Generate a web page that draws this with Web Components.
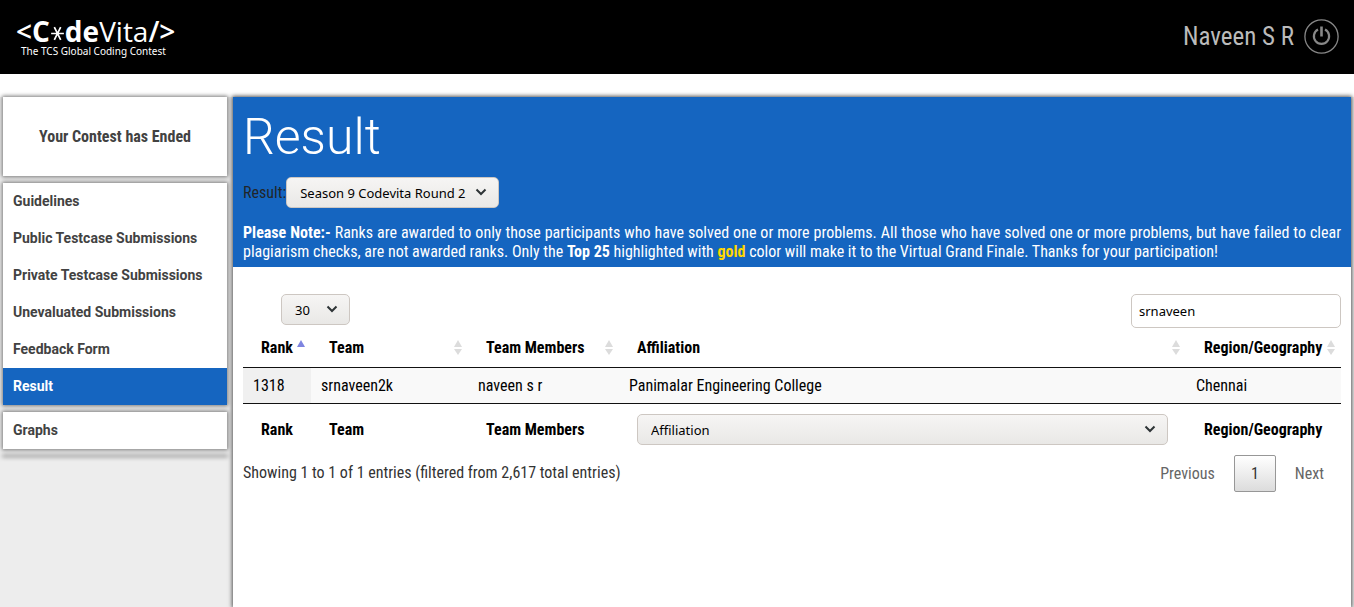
<!DOCTYPE html>
<html lang="en">
<head>
<meta charset="utf-8">
<title>CodeVita - Result</title>
<style>
  html { height: 100%; }
  body {
    margin: 0; min-height: 100%; background: #ededed; color: #212529;
    --condensed: "Roboto Condensed", Roboto, sans-serif;
    font: 16px/19px var(--condensed);
    display: flex; flex-direction: column;
  }
</style>
</head>
<body>
<contest-header user="Naveen S R"></contest-header>
<contest-layout>
  <side-nav slot="side">
    <side-card status>Your Contest has Ended</side-card>
    <side-card>
      <nav-item>Guidelines</nav-item>
      <nav-item>Public Testcase Submissions</nav-item>
      <nav-item>Private Testcase Submissions</nav-item>
      <nav-item>Unevaluated Submissions</nav-item>
      <nav-item>Feedback Form</nav-item>
      <nav-item active>Result</nav-item>
    </side-card>
    <side-card><nav-item>Graphs</nav-item></side-card>
    <side-card></side-card>
  </side-nav>
  <result-banner></result-banner>
  <result-table></result-table>
</contest-layout>

<script>
const define = (name, html, setup) => {
  const template = document.createElement('template');
  template.innerHTML = html;
  customElements.define(name, class extends HTMLElement {
    constructor() {
      super();
      this.attachShadow({ mode: 'open' }).append(template.content.cloneNode(true));
    }
    connectedCallback() { if (setup) setup(this, this.shadowRoot); }
  });
};

define('contest-logo', `
<style>
  :host { display: block; color: #fff; }
  a { display: block; color: inherit; text-decoration: none; }
  .name { display: flex; align-items: center; font: 600 28px/28px "Open Sans", sans-serif; }
  .name b { font-weight: 700; }
  .name .light { font-weight: 400; }
  svg { width: 15px; height: 17px; margin-top: 5px; }
  .tag { font: 10px/12px "Noto Sans", sans-serif; padding-left: 5px; }
</style>
<a href="#">
  <div class="name"><span>&lt;</span><b>C</b><svg viewBox="0 0 14 16" aria-hidden="true"><path d="M4 2l6 12M10 2L4 14M1 8h12" stroke="#fff" stroke-width="1.6"/></svg><b>de</b><span class="light">Vita</span><span>/&gt;</span></div>
  <div class="tag">The TCS Global Coding Contest</div>
</a>`);

define('contest-header', `
<style>
  :host { display: block; background: #000; }
  header { box-sizing: border-box; display: flex; justify-content: space-between; align-items: center; height: 74px; padding: 0 15px 1px 16px; }
  .user { display: flex; align-items: center; gap: 10px; font: 25px/32px var(--condensed); color: #bbb; }
  button { width: 35px; height: 35px; padding: 0; border: 0; background: none; display: block; }
  svg { display: block; }
</style>
<header>
  <contest-logo></contest-logo>
  <div class="user"><span></span>
    <button aria-label="Log out"><svg width="35" height="35" viewBox="0 0 35 35" fill="none" stroke="#888"><circle cx="17.5" cy="17.5" r="16.6" stroke-width="1.3"/><path d="M14 10.600A7.600 7.600 0 1 0 21 10.600" stroke-width="2.200"/><path d="M17.500 7.500v10" stroke-width="2.600"/></svg></button>
  </div>
</header>`, (el, root) => { root.querySelector('.user span').textContent = el.getAttribute('user'); });

define('contest-layout', `
<style>
  :host { display: flex; flex: 1; flex-direction: column; border-top: 23px solid #fff; }
  .row { flex: 1; display: grid; grid-template-columns: 224px 1fr; gap: 6px; padding: 0 3px; }
  main { min-width: 0; background: #fff; box-shadow: 0 0 4px 1px #555; }
</style>
<div class="row"><slot name="side"></slot><main><slot></slot></main></div>`);

define('side-nav', `
<style>
  :host { display: block; }
  nav { display: flex; flex-direction: column; gap: 7px; }
</style>
<nav><slot></slot></nav>`);

define('side-card', `
<style>
  :host { display: block; background: #fff; box-shadow: 0 0 4px 1px #777; }
  :host([status]) { padding: 30px 10px; text-align: center; font-weight: 700; color: #424242; }
</style>
<slot></slot>`);

define('nav-item', `
<style>
  :host { display: block; }
  a { display: block; padding: 9px 10px; font: 700 14px/19px Roboto, sans-serif; color: #424242; text-decoration: none; }
  :host([active]) a { background: #1565c0; color: #fff; }
</style>
<a href="#"><slot></slot></a>`);

define('select-box', `
<style>
  :host { display: inline-block; position: relative; }
  select {
    appearance: none; display: block; box-sizing: border-box; width: 100%; height: 31px; margin: 0;
    padding: 0 28px 0 13px; border: 1px solid #cdc7c2; border-radius: 5px;
    background: linear-gradient(#f6f5f4, #e9e8e6); color: #000; font: 13px/20px "Noto Sans", sans-serif;
  }
  svg { position: absolute; right: 12px; top: 11px; pointer-events: none; }
</style>
<select></select>
<svg width="12" height="8" viewBox="0 0 12 8" fill="none" aria-hidden="true"><path d="M1.500 1.500L6 6l4.500-4.500" stroke="#2e3436" stroke-width="2"/></svg>`,
(el, root) => {
  const select = root.querySelector('select');
  select.setAttribute('aria-label', el.getAttribute('label'));
  select.replaceChildren(new Option(el.getAttribute('value')));
});

define('result-banner', `
<style>
  :host { display: block; background: #1565c0; color: #fff; padding: 10px 10px 6px; }
  h1 { margin: 0; font: 300 50px/60px Roboto, sans-serif; }
  .pick { display: flex; align-items: center; margin: 10px 0 15px; color: #212529; }
  select-box { width: 213px; }
  p { margin: 0; text-align: justify; }
  .gold { color: #ffd700; }
</style>
<h1>Result</h1>
<div class="pick"><span>Result:</span><select-box label="Result" value="Season 9 Codevita Round 2"></select-box></div>
<p><b>Please Note:-</b> Ranks are awarded to only those participants who have solved one or more problems. All those who have solved one or more problems, but have failed to clear plagiarism checks, are not awarded ranks. Only the <b>Top 25</b> highlighted with <b class="gold">gold</b> color will make it to the Virtual Grand Finale. Thanks for your participation!</p>`);

define('sort-mark', `
<style>
  :host { display: block; position: absolute; right: 5px; top: 12px; }
  svg { display: block; }
  :host([up]) .up { fill: #7e84e0; }
  :host([up]) .down { display: none; }
</style>
<svg width="10" height="16" viewBox="0 0 10 16" fill="#dcdcdc" aria-hidden="true"><path class="up" d="M1 7L5 0l4 7z"/><path class="down" d="M1 9h8l-4 6z"/></svg>`);

define('result-table', `
<style>
  :host { display: block; padding: 27px 10px; }
  .tools { display: flex; justify-content: space-between; align-items: flex-start; padding-left: 38px; }
  .tools select-box { width: 69px; }
  input { box-sizing: border-box; width: 210px; height: 34px; margin: 0; padding: 0 7px; border: 1px solid #cdc7c2; border-radius: 5px; background: #fff; color: #000; font: 13px/20px "Noto Sans", sans-serif; }
  table { width: 100%; table-layout: fixed; border-collapse: separate; border-spacing: 0; color: #000; }
  th { text-align: left; font-weight: 700; white-space: nowrap; }
  thead th { position: relative; padding: 10px 18px; border-bottom: 1px solid #111; }
  tbody td { padding: 8px 10px; background: #f9f9f9; }
  tbody td:first-child { background: #f0f0f0; }
  tfoot th { padding: 10px 18px 6px; border-top: 1px solid #111; }
  tfoot select-box { display: block; }
  .foot { display: flex; justify-content: space-between; align-items: flex-start; padding-top: 4px; color: #333; }
  .foot p { margin: 8px 0 0; }
  .pages { display: flex; gap: 2px; }
  button { box-sizing: border-box; height: 37px; min-width: 42px; padding: 0 16px; border: 1px solid transparent; border-radius: 2px; background: none; color: #666; font: inherit; }
  button.current { border-color: #979797; background: linear-gradient(#fff, #dcdcdc); color: #333; }
</style>
<div class="tools"><select-box label="Entries per page" value="30"></select-box><input type="text" aria-label="Search" value="srnaveen"></div>
<table>
  <colgroup><col style="width:68px"><col style="width:157px"><col style="width:151px"><col><col style="width:155px"></colgroup>
  <thead><tr><th>Rank<sort-mark up></sort-mark></th><th>Team<sort-mark></sort-mark></th><th>Team Members<sort-mark></sort-mark></th><th>Affiliation<sort-mark></sort-mark></th><th>Region/Geography<sort-mark></sort-mark></th></tr></thead>
  <tbody><tr><td>1318</td><td>srnaveen2k</td><td>naveen s r</td><td>Panimalar Engineering College</td><td>Chennai</td></tr></tbody>
  <tfoot><tr><th>Rank</th><th>Team</th><th>Team Members</th><th><select-box label="Affiliation" value="Affiliation"></select-box></th><th>Region/Geography</th></tr></tfoot>
</table>
<div class="foot"><p>Showing 1 to 1 of 1 entries (filtered from 2,617 total entries)</p>
  <div class="pages"><button>Previous</button><button class="current">1</button><button>Next</button></div></div>`);
</script>
</body>
</html>
